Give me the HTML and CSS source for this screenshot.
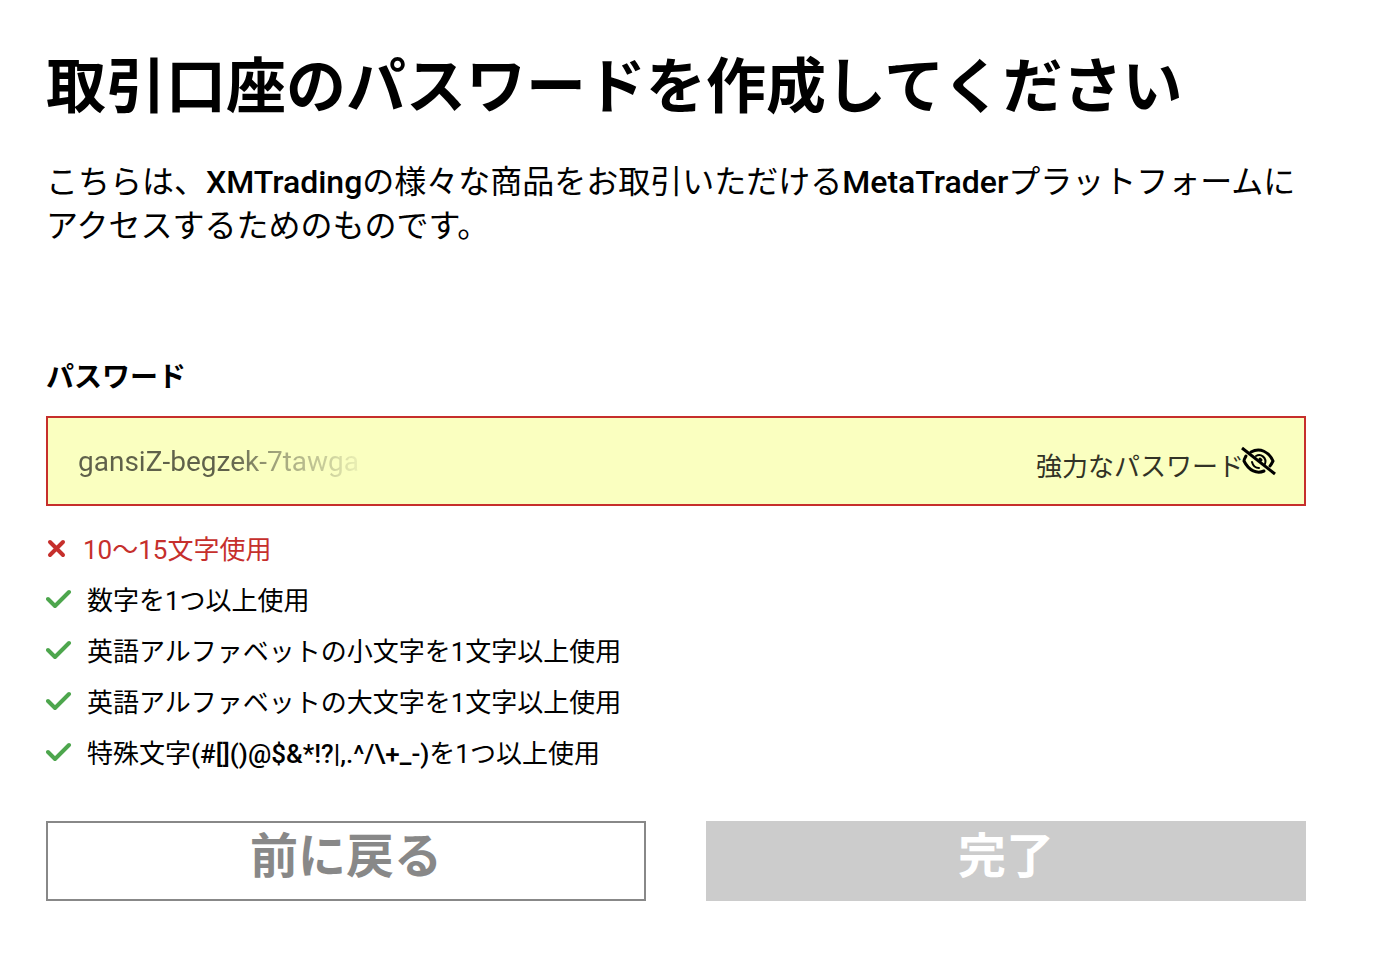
FILE: index.html
```
<!DOCTYPE html>
<html lang="ja">
<head>
    <meta charset="UTF-8">
    <meta name="viewport" content="width=device-width, initial-scale=1.0">
    <title>取引口座のパスワード</title>
    <link rel="stylesheet" href="styles.css">
</head>
<body>
    <main class="container">
        <h1>取引口座のパスワードを作成してください</h1>
        <p class="intro">こちらは、<span class="latin">XMTrading</span>の様々な商品をお取引いただける<span class="latin">MetaTrader</span>プラットフォームにアクセスするためのものです。</p>
        <form id="password-form">
            <label for="password">パスワード</label>
            <div class="field">
                <input type="text" id="password" name="password" value="gansiZ-begzek-7tawga" autocomplete="off">
                <span class="strength">強力なパスワード</span>
                <button type="button" class="toggle" aria-label="パスワードを表示">
                    <svg viewBox="0 0 36 30" width="36" height="30" fill="none" stroke="#000" stroke-width="3" stroke-linecap="round">
                        <path d="M11 6C20 1 29 6 33 15C32 17 31 19 30 20"/>
                        <path d="M6 10C5 12 4 13 4 15C9 25 17 28 24 25"/>
                        <path d="M16 10C21 7 27 12 25 18" stroke-width="2"/>
                        <path d="M12 16C13 20 16 22 19 22" stroke-width="2"/>
                        <path d="M20 13l1 1" stroke-width="3"/>
                        <path d="M2 2l33 26" stroke-linecap="butt"/>
                    </svg>
                </button>
            </div>
            <ul class="rules">
                <li class="invalid">
                    <svg viewBox="0 0 22 22" width="22" height="22"><path d="M4 5l13 13M17 5L4 18"/></svg>
                    <span>10〜15文字使用</span>
                </li>
                <li>
                    <svg viewBox="0 0 26 20" width="26" height="20"><path d="M2 10l7 7L23 3"/></svg>
                    <span>数字を1つ以上使用</span>
                </li>
                <li>
                    <svg viewBox="0 0 26 20" width="26" height="20"><path d="M2 10l7 7L23 3"/></svg>
                    <span>英語アルファベットの小文字を1文字以上使用</span>
                </li>
                <li>
                    <svg viewBox="0 0 26 20" width="26" height="20"><path d="M2 10l7 7L23 3"/></svg>
                    <span>英語アルファベットの大文字を1文字以上使用</span>
                </li>
                <li>
                    <svg viewBox="0 0 26 20" width="26" height="20"><path d="M2 10l7 7L23 3"/></svg>
                    <span>特殊文字<span class="latin">(#[]()@$&amp;*!?|,.^/\+_-)</span>を1つ以上使用</span>
                </li>
            </ul>
            <div class="buttons">
                <button type="button" class="back">前に戻る</button>
                <button type="submit" class="done">完了</button>
            </div>
        </form>
    </main>
</body>
</html>
```
FILE: styles.css
```
* {
    box-sizing: border-box;
}
body {
    margin: 0;
    background-color: #fff;
    color: #000;
    font-family: Roboto, "Noto Sans CJK JP", sans-serif;
}
.container {
    padding: 44px 76px 40px 46px;
}
h1 {
    margin: 0;
    font-size: 60px;
    line-height: 88px;
    font-weight: 700;
}
.latin {
    font-weight: 500;
}
.intro {
    margin: 28px 0 0;
    font-size: 32px;
    line-height: 44px;
}
form {
    margin-top: 108px;
}
label {
    display: block;
    font-size: 28px;
    line-height: 44px;
    font-weight: 700;
}
.field {
    display: flex;
    align-items: center;
    height: 90px;
    margin-top: 16px;
    padding: 0 28px 0 30px;
    border: 2px solid #c62f2c;
    background-color: #faffc0;
}
.field input {
    flex: 1;
    min-width: 0;
    padding: 0;
    border: none;
    outline: none;
    font: 400 28px Roboto, sans-serif;
    color: transparent;
    /* text fades out to the right */
    background: linear-gradient(to right, #5f614a 150px, #5f614a99 195px, #5f614a4d 250px, #5f614a1a 280px, transparent 282px);
    background-clip: text;
    -webkit-background-clip: text;
}
.strength {
    margin-right: -4px;
    padding-top: 6px;
    font-size: 26px;
    color: #323326;
}
.toggle {
    display: flex;
    padding: 0;
    border: none;
    background: none;
    cursor: pointer;
}
.rules {
    margin: 16px 0 0;
    padding: 0;
    list-style: none;
    font-size: 26px;
}
.rules li {
    display: flex;
    align-items: center;
    gap: 15px;
    height: 51px;
}
.rules svg {
    fill: none;
    stroke: #4da64d;
    stroke-width: 4;
    stroke-linecap: round;
    stroke-linejoin: round;
}
.rules .invalid {
    color: #c62f2c;
}
.rules .invalid svg {
    stroke: #c62f2c;
}
.buttons {
    display: grid;
    grid-template-columns: 1fr 1fr;
    gap: 60px;
    margin-top: 44px;
}
.buttons button {
    height: 80px;
    padding: 0 0 8px;
    border: 2px solid #888;
    border-radius: 0;
    background-color: #fff;
    color: #888;
    font: 700 48px/64px Roboto, "Noto Sans CJK JP", sans-serif;
    cursor: pointer;
}
.buttons .done {
    border-color: #ccc;
    background-color: #ccc;
    color: #fff;
}
```
